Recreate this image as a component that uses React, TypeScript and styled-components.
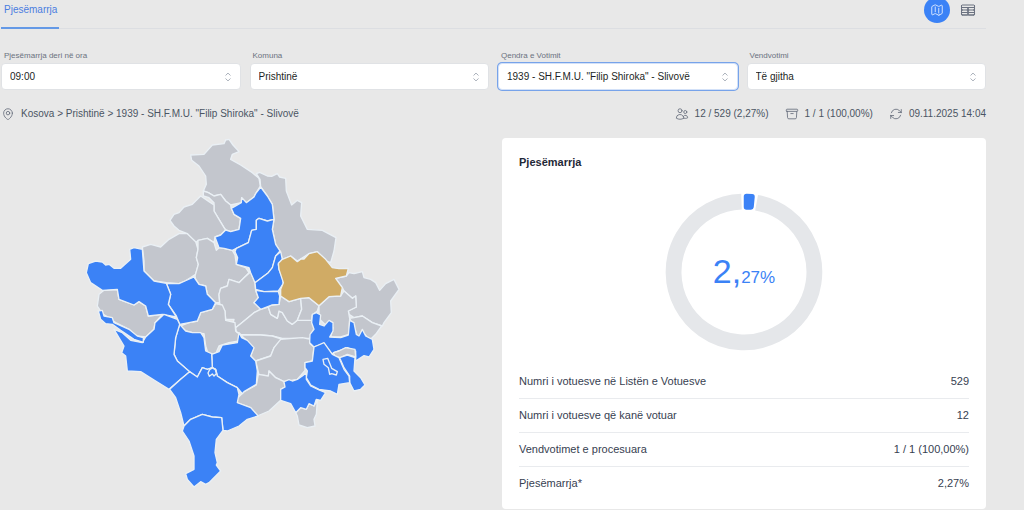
import React from "react";
import styled, { createGlobalStyle, css } from "styled-components";
import {
  HiOutlineMap,
  HiOutlineTableCells,
  HiOutlineMapPin,
  HiOutlineUsers,
  HiOutlineArchiveBox,
  HiOutlineArrowPath,
  HiOutlineChevronUpDown,
} from "react-icons/hi2";

const colors = {
  page: "#e8e8e8",
  blue: "#3b82f6",
  grey: "#c3c6cd",
  gold: "#d0ab65",
  ring: "#e5e7ea",
  muted: "#6b7280",
  text: "#4b5563",
  dark: "#1f2937",
};

const GlobalStyle = createGlobalStyle`
  *, *::before, *::after { box-sizing: border-box; }
  body {
    margin: 0;
    background: ${colors.page};
    color: ${colors.text};
    font-family: "Liberation Sans", Arial, sans-serif;
    font-size: 10px;
    line-height: 14px;
  }
  #root { display: flow-root; }
`;

const Page = styled.main`
  display: flex;
  flex-direction: column;
  margin-top: -9px;
  padding: 0 38px 0 1px;
`;

const Header = styled.header`
  display: flex;
  justify-content: space-between;
  border-bottom: 1px solid #dcdee2;
`;

const Tab = styled.a`
  height: 38px;
  margin-bottom: -1px;
  padding: 12px 2px 0 3px;
  border-bottom: 2px solid #6499e6;
  color: #4a7de0;
  text-decoration: none;
`;

const ViewSwitch = styled.div`
  display: flex;
  align-items: center;
  gap: 5px;
  padding-right: 5px;
`;

const ViewButton = styled.button<{ $active?: boolean }>`
  display: grid;
  place-items: center;
  width: 26px;
  height: 26px;
  padding: 0;
  border: 0;
  border-radius: 50%;
  background: ${(p) => (p.$active ? colors.blue : "transparent")};
  color: ${(p) => (p.$active ? "#e6efff" : colors.muted)};
  font-size: ${(p) => (p.$active ? 14 : 16)}px;
`;

const Filters = styled.form`
  display: grid;
  grid-template-columns: repeat(4, 1fr);
  gap: 9px;
  margin-top: 20px;
`;

const Field = styled.div`
  min-width: 0;
`;

const FieldLabel = styled.label`
  display: block;
  padding-left: 3px;
  color: ${colors.muted};
  font-size: 8px;
`;

const SelectBox = styled.div`
  display: grid;
  align-items: center;

  > * {
    grid-area: 1 / 1;
  }

  svg {
    justify-self: end;
    margin-right: 6px;
    color: #9ca3af;
    font-size: 14px;
    pointer-events: none;
  }
`;

const Select = styled.select<{ $focused?: boolean }>`
  appearance: none;
  width: 100%;
  height: 27px;
  padding: 0 24px 0 8px;
  border: 1px solid #e0e2e5;
  border-radius: 4px;
  outline: 0;
  background: #fff;
  color: #1c1f24;
  font: inherit;
  ${(p) =>
    p.$focused &&
    css`
      border-color: #d3e1f8;
      box-shadow: 0 0 0 1px #77a3ea;
    `}
`;

const InfoBar = styled.div`
  display: flex;
  justify-content: space-between;
  align-items: center;
  margin-top: 17px;
`;

const InfoGroup = styled.div`
  display: flex;
  gap: 16px;
`;

const Info = styled.span`
  display: flex;
  align-items: center;
  gap: 6px;
  white-space: nowrap;

  svg {
    color: ${colors.muted};
    font-size: 14px;
  }
`;

const Content = styled.div`
  display: grid;
  grid-template-columns: 1fr 1fr;
  gap: 17px;
  margin-top: 17px;
`;

const MapPane = styled.section`
  display: flex;
  justify-content: center;
  align-items: flex-start;
`;

const MapSvg = styled.svg`
  width: 316px;
  max-width: 100%;
  height: auto;
`;

const Card = styled.section`
  padding: 17px 17px 9px;
  border-radius: 4px;
  background: #fff;
  color: #374151;
  font-size: 11px;
`;

const CardTitle = styled.h2`
  margin: 0;
  color: ${colors.dark};
  font-size: 11px;
  font-weight: 700;
  line-height: 14px;
`;

const Gauge = styled.div`
  display: grid;
  place-items: center;
  margin: 23px 0 12px;

  > * {
    grid-area: 1 / 1;
  }
`;

const GaugeValue = styled.div`
  padding-top: 4px;
  color: ${colors.blue};
  font-size: 34px;
  line-height: 36px;

  small {
    font-size: 17px;
  }
`;

const Table = styled.table`
  width: 100%;
  border-collapse: collapse;

  tr + tr {
    border-top: 1px solid #e9ebee;
  }

  th,
  td {
    height: 34px;
    padding: 0;
    font-weight: 400;
    text-align: left;
  }

  td {
    text-align: right;
  }
`;

type Tone = "grey" | "blue" | "gold";

const municipalities: [Tone, string][] = [
  ["grey", "575,462 615,460 640,432 675,428 680,417 690,415 702,432 720,452 700,460 695,475 725,492 760,515 780,532 784,555 770,578 765,588 742,605 728,590 727,605 695,612 680,600 665,580 645,585 628,575 613,570 622,550 620,525 600,495 578,478"],
  ["grey", "772,518 782,514 805,525 818,526 835,518 842,528 860,532 862,570 878,612 895,598 908,605 905,645 925,685 970,688 1011,710 1005,750 995,785 980,780 955,752 930,758 895,780 875,765 850,775 843,750 830,730 820,685 825,655 820,610 805,585 785,558 783,535"],
  ["grey", "613,570 613,585 630,590 645,605 645,630 660,655 675,680 680,687 695,692 720,685 725,652 705,640 697,622 695,612 680,600 665,580 645,585 628,575"],
  ["grey", "605,585 630,602 645,612 645,630 660,655 675,680 680,687 665,702 648,708 645,725 625,712 598,718 590,725 565,698 540,688 525,675 513,658 525,640 540,635 555,618 580,610"],
  ["grey", "430,738 455,730 485,738 510,715 540,698 565,698 590,722 597,745 592,770 598,790 590,820 575,830 558,840 540,848 502,845 465,840 450,825 435,810 435,780"],
  ["grey", "597,718 625,712 645,725 652,748 660,740 675,742 700,748 708,762 712,790 740,800 750,815 735,830 720,845 690,835 685,855 665,862 660,880 662,905 650,905 625,880 620,855 600,850 590,835 588,825 598,790 592,770 597,745"],
  ["grey", "750,800 768,845 770,868 778,890 765,905 785,925 765,935 735,960 710,980 700,975 705,955 680,955 678,930 665,920 662,905 660,880 665,862 685,855 690,835 720,845 735,830 752,815"],
  ["grey", "545,975 570,965 595,960 605,935 640,925 650,908 670,912 678,930 680,958 708,965 710,990 722,1000 720,1020 690,1025 660,1035 650,1058 628,1060 620,1035 615,998 580,995 560,990"],
  ["grey", "710,980 735,960 765,935 785,925 808,918 815,940 835,952 840,930 850,935 865,960 880,970 895,958 938,958 945,982 933,1012 850,1012 820,1005 785,1002 725,1000 712,992"],
  ["grey", "818,912 840,910 845,885 870,902 905,892 908,925 895,958 880,970 865,960 850,935 840,930 835,952 815,940 808,918"],
  ["grey", "905,892 930,890 960,914 955,930 940,942 938,958 895,958 908,925"],
  ["grey", "725,1002 785,1002 820,1005 850,1015 825,1040 815,1065 770,1080 755,1065 762,1045 745,1020"],
  ["grey", "845,1015 910,1010 935,1015 933,1028 945,1038 940,1080 918,1085 918,1108 895,1135 855,1142 830,1130 810,1110 808,1125 780,1122 770,1080 815,1065 825,1040"],
  ["grey", "778,1120 808,1125 810,1110 830,1130 855,1142 858,1158 845,1165 845,1198 810,1230 775,1245 755,1220 712,1205 715,1192 735,1172 772,1152"],
  ["grey", "1042,825 1050,815 1065,818 1090,812 1095,830 1115,835 1130,845 1142,868 1160,848 1185,835 1200,865 1175,900 1177,935 1155,965 1150,975 1120,965 1090,945 1065,950 1050,940 1048,930 1072,918 1070,885 1060,892 1035,870 1030,860 1010,832"],
  ["grey", "960,914 990,887 1025,885 1035,870 1060,892 1070,885 1072,918 1048,930 1052,952 1050,1000 1025,1008 995,1008 1002,980 990,965 980,972 965,958 960,940"],
  ["grey", "1052,952 1065,950 1090,945 1120,965 1148,975 1130,1000 1112,1018 1098,1000 1090,1005 1075,1005 1068,985"],
  ["grey", "890,1235 905,1220 922,1225 930,1208 945,1215 955,1198 952,1240 945,1255 948,1275 925,1280 900,1272 895,1245"],
  ["grey", "300,880 315,868 355,866 360,895 405,912 420,902 440,915 448,945 490,940 468,965 465,985 440,1008 410,1005 390,985 350,965 310,938 295,915"],
  ["blue", "785,558 805,585 820,610 825,655 805,660 780,652 772,658 772,685 758,688 748,725 712,742 700,748 675,742 660,740 648,708 665,702 680,687 695,692 720,685 725,652 705,640 697,622 727,605 728,590 742,605 765,588 770,578"],
  ["blue", "780,652 805,660 825,655 820,685 830,730 843,750 830,765 820,800 808,815 768,845 755,815 750,800 712,790 716,770 708,752 712,742 748,725 758,688 772,685 772,658"],
  ["blue", "845,752 850,775 838,790 840,805 850,830 853,848 838,870 795,872 770,865 768,845 808,815 820,800 830,765"],
  ["blue", "770,868 795,872 838,872 842,885 840,910 818,912 785,925 765,905 778,890"],
  ["blue", "940,940 952,935 965,942 962,970 975,975 990,958 1002,965 1002,990 992,1008 1025,1010 1048,1002 1052,958 1065,965 1072,1000 1080,1005 1090,985 1100,1005 1120,1015 1125,1045 1110,1068 1095,1064 1070,1080 1070,1050 1045,1040 1005,1055 1000,1060 975,1028 945,1038 932,1025 933,1000 945,985 938,965"],
  ["grey", "1003,1055 1020,1050 1040,1040 1068,1045 1070,1068 1045,1060 1025,1070 1008,1066"],
  ["blue", "1022,1070 1045,1062 1068,1070 1065,1110 1085,1130 1098,1152 1085,1165 1065,1170 1052,1145 1052,1125 1035,1100"],
  ["blue", "945,1038 975,1025 1000,1060 1020,1070 1035,1105 1050,1125 1052,1145 1020,1150 1015,1180 995,1170 960,1165 935,1152 922,1130 925,1110 918,1100 918,1085 940,1080"],
  ["blue", "972,1075 986,1072 998,1102 1015,1112 1012,1122 998,1118 992,1120 988,1100 975,1090"],
  ["blue", "922,1115 922,1135 935,1155 960,1167 980,1175 965,1198 952,1195 945,1215 930,1208 922,1225 905,1220 890,1235 875,1208 845,1198 845,1165 858,1158 855,1142 870,1136 880,1140 895,1135 910,1125"],
  ["blue", "720,995 728,1010 745,1018 765,1040 755,1065 770,1080 775,1110 772,1150 735,1172 730,1178 715,1160 685,1145 655,1125 650,1105 640,1100 638,1060 660,1052 670,1032 715,1025"],
  ["blue", "542,970 560,990 580,995 605,995 615,1010 620,1050 638,1058 640,1100 625,1105 610,1100 595,1128 575,1115 535,1080 525,1060 530,1010"],
  ["blue", "502,847 540,848 558,840 585,828 600,850 620,855 625,880 650,905 640,925 605,935 595,960 570,965 542,970 532,945 508,910 515,880"],
  ["blue", "392,745 405,740 430,745 435,810 465,840 502,847 515,880 508,910 532,948 490,940 448,945 440,915 420,902 405,912 360,895 355,865 310,868 275,845 262,815 268,788 290,780 310,783 320,792 330,790 345,802 365,802 395,775"],
  ["blue", "495,940 535,955 542,970 530,1010 525,1060 535,1080 572,1112 545,1135 510,1165 470,1140 425,1112 385,1110 380,1065 368,1055 375,1035 345,985 370,995 395,1018 430,1025 440,1008 465,985 468,965"],
  ["blue", "298,930 310,928 315,945 340,950 345,965 390,985 415,1005 433,1010 433,1024 405,1015 365,988 340,970 320,968 305,955"],
  ["blue", "512,1165 545,1135 572,1112 595,1128 610,1100 625,1105 640,1100 650,1105 655,1125 685,1145 715,1160 720,1180 715,1205 755,1220 778,1245 745,1255 720,1275 685,1290 672,1288 668,1250 640,1248 610,1240 575,1255 555,1275 545,1235 530,1190"],
  ["blue", "632,1106 640,1101 649,1106 652,1118 645,1125 640,1119 631,1126 627,1116"],
  ["blue", "555,1275 575,1255 610,1240 640,1248 668,1250 672,1288 652,1315 648,1355 655,1385 652,1392 665,1410 630,1445 620,1450 605,1442 585,1458 565,1435 560,1418 585,1405 585,1365 570,1320 550,1290"],
  ["gold", "850,775 875,765 895,782 906,774 915,774 930,758 955,752 980,775 1000,800 1020,803 1048,802 1042,825 1010,832 1030,860 1025,885 990,887 960,914 930,890 905,892 870,902 845,885 845,865 853,845 840,805 838,787"],
];

function KosovoMap() {
  return (
    <MapSvg viewBox="258 411 948 1053" role="img" aria-label="Kosova">
      {municipalities.map(([tone, points], i) => (
        <polygon
          key={i}
          points={points}
          fill={colors[tone]}
          stroke="#eaf0f5"
          strokeWidth={4}
          strokeLinejoin="round"
        />
      ))}
    </MapSvg>
  );
}

interface FilterProps {
  id: string;
  label: string;
  value: string;
  focused?: boolean;
}

function Filter({ id, label, value, focused }: FilterProps) {
  return (
    <Field>
      <FieldLabel htmlFor={id}>{label}</FieldLabel>
      <SelectBox>
        <Select id={id} $focused={focused}>
          <option>{value}</option>
        </Select>
        <HiOutlineChevronUpDown aria-hidden />
      </SelectBox>
    </Field>
  );
}

const rows = [
  ["Numri i votuesve në Listën e Votuesve", "529"],
  ["Numri i votuesve që kanë votuar", "12"],
  ["Vendvotimet e procesuara", "1 / 1 (100,00%)"],
  ["Pjesëmarrja*", "2,27%"],
];

export default function App() {
  return (
    <>
      <GlobalStyle />
      <Page>
        <Header>
          <Tab href="#pjesemarrja">Pjesëmarrja</Tab>
          <ViewSwitch>
            <ViewButton type="button" $active aria-label="Harta">
              <HiOutlineMap />
            </ViewButton>
            <ViewButton type="button" aria-label="Tabela">
              <HiOutlineTableCells />
            </ViewButton>
          </ViewSwitch>
        </Header>

        <Filters>
          <Filter id="ora" label="Pjesëmarrja deri në ora" value="09:00" />
          <Filter id="komuna" label="Komuna" value="Prishtinë" />
          <Filter
            id="qendra"
            label="Qendra e Votimit"
            value={'1939 - SH.F.M.U. "Filip Shiroka" - Slivovë'}
            focused
          />
          <Filter id="vendvotimi" label="Vendvotimi" value="Të gjitha" />
        </Filters>

        <InfoBar>
          <Info>
            <HiOutlineMapPin />
            {'Kosova > Prishtinë > 1939 - SH.F.M.U. "Filip Shiroka" - Slivovë'}
          </Info>
          <InfoGroup>
            <Info>
              <HiOutlineUsers />
              12 / 529 (2,27%)
            </Info>
            <Info>
              <HiOutlineArchiveBox />1 / 1 (100,00%)
            </Info>
            <Info>
              <HiOutlineArrowPath />
              09.11.2025 14:04
            </Info>
          </InfoGroup>
        </InfoBar>

        <Content>
          <MapPane>
            <KosovoMap />
          </MapPane>
          <Card>
            <CardTitle>Pjesëmarrja</CardTitle>
            <Gauge>
              <svg width="160" height="160" viewBox="0 0 160 160" aria-hidden>
                <path
                  d="M92.6 10.7A70.4 70.4 0 1 1 77.5 9.6"
                  fill="none"
                  stroke={colors.ring}
                  strokeWidth="15.8"
                />
                <path
                  d="M82.5 4.5L88 4.8L87 15L82.5 15Z"
                  fill={colors.blue}
                  stroke={colors.blue}
                  strokeWidth="5.5"
                  strokeLinejoin="round"
                />
              </svg>
              <GaugeValue>
                2,<small>27%</small>
              </GaugeValue>
            </Gauge>
            <Table>
              <tbody>
                {rows.map(([name, value]) => (
                  <tr key={name}>
                    <th scope="row">{name}</th>
                    <td>{value}</td>
                  </tr>
                ))}
              </tbody>
            </Table>
          </Card>
        </Content>
      </Page>
    </>
  );
}
